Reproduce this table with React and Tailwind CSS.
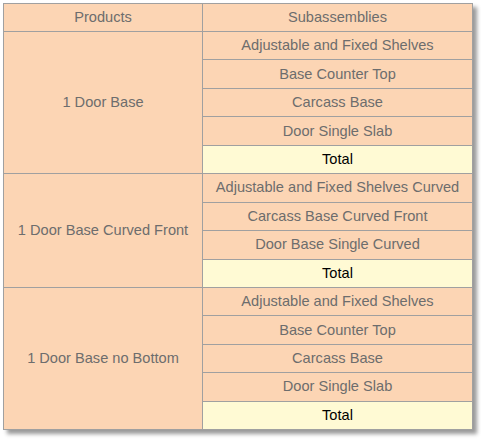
export default function App() {
  const groups = [
    { name: "1 Door Base", items: ["Adjustable and Fixed Shelves", "Base Counter Top", "Carcass Base", "Door Single Slab"] },
    { name: "1 Door Base Curved Front", items: ["Adjustable and Fixed Shelves Curved", "Carcass Base Curved Front", "Door Base Single Curved"] },
    { name: "1 Door Base no Bottom", items: ["Adjustable and Fixed Shelves", "Base Counter Top", "Carcass Base", "Door Single Slab"] },
  ];
  const cell = "border border-[#a0a0a0] text-center align-middle p-0 pb-[1px] leading-[16px]";
  return (
    <div className="w-[481px] h-[439px] bg-white pl-[3px] pt-[3px]" style={{ fontFamily: '"Liberation Sans", Arial, sans-serif' }}>
      <table className="w-[470px] border-collapse table-fixed text-[14.6px] text-[#6d6d6d] bg-[#fcd5b4] shadow-[4px_4px_4px_rgba(0,0,0,0.4)]" style={{ fontFamily: '"Liberation Sans", Arial, sans-serif' }}>
        <colgroup>
          <col className="w-[199px]" />
          <col />
        </colgroup>
        <thead>
          <tr className="h-[28px]">
            <th className={cell + " font-normal"}>Products</th>
            <th className={cell + " font-normal"}>Subassemblies</th>
          </tr>
        </thead>
        <tbody>
          {groups.map((g, gi) => (
            <>
              {g.items.map((it, i) => (
                <tr key={gi + "-" + i} className="h-[28.45px]">
                  {i === 0 && (
                    <td className={cell} rowSpan={g.items.length + 1}>{g.name}</td>
                  )}
                  <td className={cell}>{it}</td>
                </tr>
              ))}
              <tr key={gi + "-t"} className="h-[28.45px]">
                <td className={cell + " bg-[#fffad4] text-black"}>Total</td>
              </tr>
            </>
          ))}
        </tbody>
      </table>
    </div>
  );
}
